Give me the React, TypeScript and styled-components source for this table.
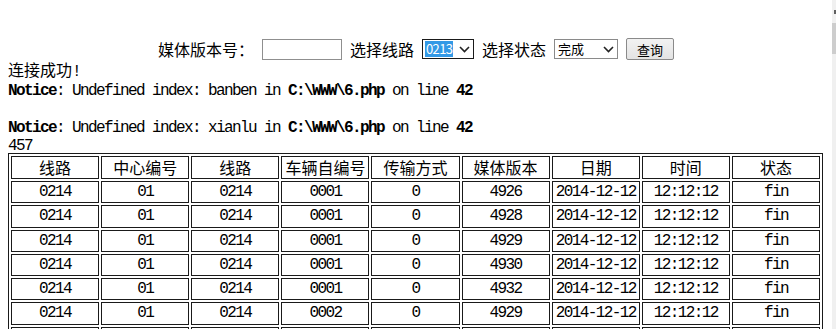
import React from "react";
import styled, { createGlobalStyle } from "styled-components";

const Global = createGlobalStyle`
  html, body { margin: 0; padding: 0; overflow: hidden; background: #fff; }
  body { font-family: "Noto Sans CJK SC", "Liberation Sans", sans-serif; color: #000; }
`;

const Frame = styled.div`
  display: flex;
  width: 836px;
  height: 329px;
  overflow: hidden;
`;

const Page = styled.div`
  width: 832px;
  padding: 38px 8px 0 8px;
  box-sizing: border-box;
`;

const ScrollTrack = styled.div`
  width: 4px;
  height: 329px;
  background: #f0f0f0;
  display: flex;
  flex-direction: column;
`;

const ScrollArrow = styled.div`
  margin-top: 10px;
  height: 4px;
  width: 2px;
  margin-left: 2px;
  background: #606060;
`;

const ScrollThumb = styled.div`
  margin-top: 9px;
  height: 31px;
  background: #cdcdcd;
`;

const SearchBar = styled.div`
  display: flex;
  justify-content: center;
  align-items: center;
  gap: 8px;
  height: 22px;
  font-size: 16px;
`;

const Label = styled.span`
  font-family: "Noto Sans CJK SC", sans-serif;
  font-size: 16px;
  line-height: 22px;
  white-space: nowrap;
`;

const TextBox = styled.div`
  width: 80px;
  height: 21px;
  box-sizing: border-box;
  border: 1px solid #8f8f8f;
  background: #fff;
`;

const FakeSelect = styled.div<{ $w: number; $dark?: boolean }>`
  width: ${(p) => p.$w}px;
  height: 20px;
  box-sizing: border-box;
  border: 1px solid ${(p) => (p.$dark ? "#1a1a1a" : "#8a8a8a")};
  background: #fff;
  display: flex;
  align-items: center;
  justify-content: space-between;
  padding: 0 3px 0 2px;
`;

const SelectValue = styled.span<{ $hl?: boolean }>`
  font-family: "Noto Sans CJK SC", "Liberation Sans", sans-serif;
  font-size: 13px;
  line-height: 16px;
  padding: 0 1px;
  letter-spacing: ${(p) => (p.$hl ? "-0.6px" : "0")};
  background: ${(p) => (p.$hl ? "#3399e6" : "transparent")};
  color: ${(p) => (p.$hl ? "#fff" : "#000")};
`;

const Button = styled.div`
  width: 48px;
  height: 22px;
  box-sizing: border-box;
  border: 1px solid #8a8a8a;
  border-radius: 2px;
  background: linear-gradient(#f2f2f2, #e3e3e3);
  display: flex;
  align-items: center;
  justify-content: center;
  font-family: "Noto Sans CJK SC", sans-serif;
  font-size: 13px;
`;

const Output = styled.div`
  font-size: 16px;
  line-height: 18.5px;
`;

const Line = styled.div`
  height: 18.5px;
  white-space: pre;
`;

const CnText = styled.span`
  font-family: "Noto Sans CJK SC", sans-serif;
  font-size: 16px;
`;

const Mono = styled.span<{ $bold?: boolean }>`
  font-family: "Liberation Mono", monospace;
  font-size: 16px;
  letter-spacing: -1.6px;
  font-weight: ${(p) => (p.$bold ? 700 : 400)};
`;

const Table = styled.table`
  width: 815px;
  table-layout: fixed;
  border-collapse: separate;
  border-spacing: 2px;
  border: 1px solid #1a1a1a;
`;

const HeadCell = styled.th`
  border: 1px solid #1a1a1a;
  padding: 1px;
  height: 20px;
  box-sizing: border-box;
  font-family: "Noto Sans CJK SC", sans-serif;
  font-weight: 400;
  font-size: 16px;
  line-height: 19.5px;
  text-align: center;
  white-space: nowrap;
  overflow: hidden;
`;

const Cell = styled.td`
  border: 1px solid #1a1a1a;
  padding: 1px;
  font-family: "Liberation Mono", monospace;
  font-size: 16px;
  letter-spacing: -1.6px;
  line-height: 18.3px;
  text-align: center;
  white-space: nowrap;
`;

const Chevron = () => (
  <svg width="11" height="7" viewBox="0 0 11 7">
    <path d="M1 1 L5.5 5.5 L10 1" fill="none" stroke="#222" strokeWidth="1.6" />
  </svg>
);

const headers = ["线路", "中心编号", "线路", "车辆自编号", "传输方式", "媒体版本", "日期", "时间", "状态"];

const rows = [
  ["0214", "01", "0214", "0001", "0", "4926"],
  ["0214", "01", "0214", "0001", "0", "4928"],
  ["0214", "01", "0214", "0001", "0", "4929"],
  ["0214", "01", "0214", "0001", "0", "4930"],
  ["0214", "01", "0214", "0001", "0", "4932"],
  ["0214", "01", "0214", "0002", "0", "4929"],
  ["0214", "01", "0214", "0002", "0", "4930"],
];

export default function App() {
  return (
    <>
      <Global />
      <Frame>
        <Page>
          <SearchBar>
            <Label>媒体版本号：</Label>
            <TextBox />
            <Label>选择线路</Label>
            <FakeSelect $w={52} $dark>
              <SelectValue $hl>0213</SelectValue>
              <Chevron />
            </FakeSelect>
            <Label>选择状态</Label>
            <FakeSelect $w={64}>
              <SelectValue>完成</SelectValue>
              <Chevron />
            </FakeSelect>
            <Button>查询</Button>
          </SearchBar>
          <Output>
            <Line>
              <CnText>连接成功</CnText>
              <Mono>!</Mono>
            </Line>
            <Line>
              <Mono $bold>Notice</Mono>
              <Mono>: Undefined index: banben in </Mono>
              <Mono $bold>C:\WWW\6.php</Mono>
              <Mono> on line </Mono>
              <Mono $bold>42</Mono>
            </Line>
            <Line> </Line>
            <Line>
              <Mono $bold>Notice</Mono>
              <Mono>: Undefined index: xianlu in </Mono>
              <Mono $bold>C:\WWW\6.php</Mono>
              <Mono> on line </Mono>
              <Mono $bold>42</Mono>
            </Line>
            <Line>
              <Mono>457</Mono>
            </Line>
          </Output>
          <Table>
            <thead>
              <tr>
                {headers.map((h, i) => (
                  <HeadCell key={i}>{h}</HeadCell>
                ))}
              </tr>
            </thead>
            <tbody>
              {rows.map((r, i) => (
                <tr key={i}>
                  {r.map((c, j) => (
                    <Cell key={j}>{c}</Cell>
                  ))}
                  <Cell>2014-12-12</Cell>
                  <Cell>12:12:12</Cell>
                  <Cell>fin</Cell>
                </tr>
              ))}
            </tbody>
          </Table>
        </Page>
        <ScrollTrack>
          <ScrollArrow />
          <ScrollThumb />
        </ScrollTrack>
      </Frame>
    </>
  );
}
